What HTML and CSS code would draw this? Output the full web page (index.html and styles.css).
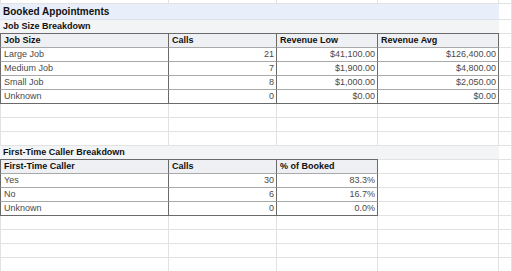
FILE: index.html
```html
<!DOCTYPE html>
<html>
<head>
<meta charset="utf-8">
<link rel="stylesheet" href="styles.css">
</head>
<body>
<div class="sheet">
  <!-- partial top row -->
  <div class="c first"></div><div class="c"></div><div class="c"></div><div class="c"></div><div class="c"></div>
  <!-- title -->
  <div class="title span4">Booked Appointments</div><div class="c"></div>
  <!-- section 1 -->
  <div class="sec span4 dark-b">Job Size Breakdown</div><div class="c"></div>
  <!-- header 1 -->
  <div class="t hd first">Job Size</div><div class="t hd">Calls</div><div class="t hd">Revenue Low</div><div class="t hd">Revenue Avg</div><div class="c"></div>
  <div class="t first">Large Job</div><div class="t num">21</div><div class="t num">$41,100.00</div><div class="t num">$126,400.00</div><div class="c"></div>
  <div class="t first">Medium Job</div><div class="t num">7</div><div class="t num">$1,900.00</div><div class="t num">$4,800.00</div><div class="c"></div>
  <div class="t first">Small Job</div><div class="t num">8</div><div class="t num">$1,000.00</div><div class="t num">$2,050.00</div><div class="c"></div>
  <div class="t first last">Unknown</div><div class="t num last">0</div><div class="t num last">$0.00</div><div class="t num last">$0.00</div><div class="c"></div>
  <!-- blanks -->
  <div class="c first"></div><div class="c"></div><div class="c"></div><div class="c"></div><div class="c"></div>
  <div class="c first"></div><div class="c"></div><div class="c"></div><div class="c"></div><div class="c"></div>
  <div class="c first"></div><div class="c"></div><div class="c"></div><div class="c"></div><div class="c"></div>
  <!-- section 2 -->
  <div class="sec span3 dark-b">First-Time Caller Breakdown</div><div class="sec"></div><div class="c"></div>
  <div class="t hd first">First-Time Caller</div><div class="t hd">Calls</div><div class="t hd">% of Booked</div><div class="c"></div><div class="c"></div>
  <div class="t first">Yes</div><div class="t num">30</div><div class="t num">83.3%</div><div class="c"></div><div class="c"></div>
  <div class="t first">No</div><div class="t num">6</div><div class="t num">16.7%</div><div class="c"></div><div class="c"></div>
  <div class="t first last">Unknown</div><div class="t num last">0</div><div class="t num last">0.0%</div><div class="c"></div><div class="c"></div>
  <!-- blanks -->
  <div class="c first"></div><div class="c"></div><div class="c"></div><div class="c"></div><div class="c"></div>
  <div class="c first"></div><div class="c"></div><div class="c"></div><div class="c"></div><div class="c"></div>
  <div class="c first"></div><div class="c"></div><div class="c"></div><div class="c"></div><div class="c"></div>
  <div class="c first"></div><div class="c"></div><div class="c"></div><div class="c"></div><div class="c"></div>
</div>
</body>
</html>
```
FILE: styles.css
```css
html, body {
  margin: 0;
  padding: 0;
  background: #ffffff;
}
body {
  font-family: "Liberation Sans", Arial, sans-serif;
  overflow: hidden;
}
.sheet {
  display: grid;
  grid-template-columns: 169px 108px 101px 121px 1fr;
  grid-template-rows: 4px 16px;
  grid-auto-rows: 14px;
  width: 512px;
}
.sheet > div {
  box-sizing: border-box;
  white-space: nowrap;
  overflow: hidden;
  font-size: 9px;
  line-height: 13px;
  padding: 0 3px;
}
.c {
  border-right: 1px solid #e2e2e2;
  border-bottom: 1px solid #e2e2e2;
}
.c.first {
  border-left: 1px solid #e2e2e2;
}
.span4 { grid-column: span 4; }
.span3 { grid-column: span 3; }
.title {
  background: #e8effb;
  border-bottom: 1px solid #dde3ec;
  font-weight: bold;
  font-size: 10px !important;
  line-height: 15px !important;
  color: #111;
}
.sec {
  background: #f3f4f6;
  border-bottom: 1px solid #e2e2e2;
  font-weight: bold;
  color: #111;
}
.sec.dark-b {
  border-bottom-color: #6a6a6a;
}
.t {
  border-right: 1px solid #6a6a6a;
  border-bottom: 1px solid #a9a9a9;
  color: #4a4a4a;
}
.t.first {
  border-left: 1px solid #6a6a6a;
}
.t.last {
  border-bottom-color: #6a6a6a;
}
.t.hd {
  background: #eef0f4;
  font-weight: bold;
  color: #111;
}
.t.num {
  text-align: right;
  padding: 0 2px 0 3px;
}
```
